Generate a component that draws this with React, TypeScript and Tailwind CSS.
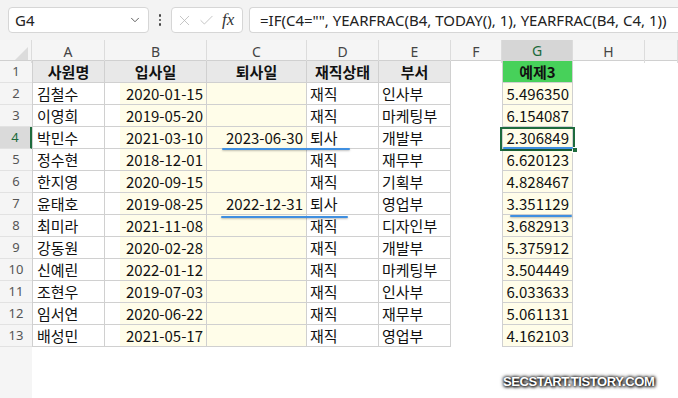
import { ChevronDown, X, Check } from "lucide-react";

const rows = [
  ["김철수", "2020-01-15", "", "재직", "인사부", "5.496350"],
  ["이영희", "2019-05-20", "", "재직", "마케팅부", "6.154087"],
  ["박민수", "2021-03-10", "2023-06-30", "퇴사", "개발부", "2.306849"],
  ["정수현", "2018-12-01", "", "재직", "재무부", "6.620123"],
  ["한지영", "2020-09-15", "", "재직", "기획부", "4.828467"],
  ["윤태호", "2019-08-25", "2022-12-31", "퇴사", "영업부", "3.351129"],
  ["최미라", "2021-11-08", "", "재직", "디자인부", "3.682913"],
  ["강동원", "2020-02-28", "", "재직", "개발부", "5.375912"],
  ["신예린", "2022-01-12", "", "재직", "마케팅부", "3.504449"],
  ["조현우", "2019-07-03", "", "재직", "인사부", "6.033633"],
  ["임서연", "2020-06-22", "", "재직", "재무부", "5.061131"],
  ["배성민", "2021-05-17", "", "재직", "영업부", "4.162103"],
];

const cols = ["A", "B", "C", "D", "E", "F", "G", "H", ""];
const grid = "grid grid-cols-[32px_73px_102px_100px_72px_72px_51px_71px_72px_1fr]";
const cell = "h-[22px] border-r border-b border-[#d0d0d0] text-[15px] leading-[21px] text-[#111] whitespace-nowrap overflow-hidden";

export default function App() {
  return (
    <div className="w-[678px] h-[398px] bg-white overflow-hidden relative font-['Noto_Sans_CJK_KR',sans-serif]">
      {/* formula bar */}
      <div className="h-[40px] bg-[#f3f3f3] flex items-center pl-[8px] gap-0">
        <div className="w-[141px] h-[26px] bg-white border border-[#d6d6d6] rounded-[4px] flex items-center justify-between pl-[6px] pr-[6px]">
          <span className="text-[15px] text-[#222] font-['Noto_Sans',sans-serif]">G4</span>
          <ChevronDown size={14} strokeWidth={1.6} className="text-[#555]" />
        </div>
        <div className="w-[22px] flex flex-col items-center gap-[2px]">
          <span className="w-[2.5px] h-[2.5px] bg-[#444] rounded-full" />
          <span className="w-[2.5px] h-[2.5px] bg-[#444] rounded-full" />
          <span className="w-[2.5px] h-[2.5px] bg-[#444] rounded-full" />
        </div>
        <div className="w-[72px] h-[26px] bg-white border border-[#d6d6d6] rounded-[4px] flex items-center pl-[4px] gap-[5px]">
          <X size={17} strokeWidth={1.1} className="text-[#b5b5b5]" />
          <Check size={17} strokeWidth={1.1} className="text-[#b5b5b5]" />
          <span className="text-[17px] italic font-['Liberation_Serif',serif] text-[#333] ml-[2px]">fx</span>
        </div>
        <div className="ml-[6px] flex-1 h-[26px] bg-white border border-[#d6d6d6] rounded-l-[4px] border-r-0 flex items-center pl-[10px]">
          <span className="text-[15px] text-[#222] font-['Noto_Sans',sans-serif] whitespace-nowrap">
            =IF(C4="", YEARFRAC(B4, TODAY(), 1), YEARFRAC(B4, C4, 1))
          </span>
        </div>
      </div>

      <div className="relative">
        {/* column headers */}
        <div className={`${grid} h-[21px] bg-[#f5f5f5] border-b border-[#d0d0d0]`}>
          <div className="relative border-r border-[#dcdcdc]">
            <div className="absolute right-[3px] bottom-[3px] w-0 h-0 border-l-[13px] border-l-transparent border-b-[13px] border-b-[#dcdcdc]" />
          </div>
          {cols.map((c, i) => (
            <div
              key={i}
              className={`flex items-center justify-center text-[14px] font-['Noto_Sans',sans-serif] border-r border-[#dcdcdc] ${
                c === "G" ? "bg-[#d6d6d6] text-[#1b6a3a] border-b-2 border-b-[#1e6b3d]" : "text-[#444]"
              }`}
            >
              {c}
            </div>
          ))}
        </div>

        {/* header row 1 */}
        <div className={grid}>
          <div className="h-[22px] bg-[#f5f5f5] border-b border-[#e2e2e2] flex items-center justify-center text-[13px] text-[#555] font-['Noto_Sans',sans-serif]">1</div>
          {["사원명", "입사일", "퇴사일", "재직상태", "부서"].map((h, i) => (
            <div key={h} className={`${cell} ${i === 0 ? "border-l" : ""} bg-[#e8e8e8] font-bold text-center text-[14px]`}>{h}</div>
          ))}
          <div />
          <div className={`${cell} border-l bg-[#47d15a] font-bold text-center text-[14px]`}>예제3</div>
          <div />
          <div />
        </div>

        {rows.map((r, idx) => {
          const n = idx + 2;
          const sel = n === 4;
          return (
            <div key={n} className={grid}>
              <div
                className={`h-[22px] border-b border-[#e2e2e2] flex items-center justify-center text-[13px] font-['Noto_Sans',sans-serif] ${
                  sel ? "bg-[#dadada] text-[#1b6a3a] border-r-2 border-r-[#1e6b3d]" : "bg-[#f5f5f5] text-[#555]"
                }`}
              >
                {n}
              </div>
              <div className={`${cell} border-l pl-[4px]`}>{r[0]}</div>
              <div className={`${cell} pl-[15px]`}>
                <div className="h-full bg-[#fffde9] text-right pr-[3px]">{r[1]}</div>
              </div>
              <div className={`${cell} bg-[#fffde9] text-right pr-[3px]`}>{r[2]}</div>
              <div className={`${cell} pl-[3px]`}>{r[3]}</div>
              <div className={`${cell} pl-[3px]`}>{r[4]}</div>
              <div />
              <div className={`${cell} border-l bg-[#fffde9] text-right pr-[3px]`}>{r[5]}</div>
              <div />
              <div />
            </div>
          );
        })}

        <div className="h-[60px] w-[32px] bg-[#f5f5f5]" />

        {/* selection G4 */}
        <div className="absolute left-[500px] top-[87px] w-[75px] h-[24px] border-2 border-[#1e6b3d]" />
        <div className="absolute left-[572px] top-[107px] w-[6px] h-[6px] bg-[#1e6b3d] border border-white" />

        {/* hand-drawn underlines */}
        <div className="absolute left-[222px] top-[108px] w-[128px] h-[2px] rounded-full bg-[#3f8fe0] shadow-[0_1px_2px_rgba(0,0,0,0.25)]" />
        <div className="absolute left-[503px] top-[107px] w-[70px] h-[2px] rounded-full bg-[#3f8fe0] shadow-[0_1px_2px_rgba(0,0,0,0.25)]" />
        <div className="absolute left-[221px] top-[176px] w-[127px] h-[2px] rounded-full bg-[#3f8fe0] shadow-[0_1px_2px_rgba(0,0,0,0.25)]" />
        <div className="absolute left-[510px] top-[175px] w-[62px] h-[2px] rounded-full bg-[#3f8fe0] shadow-[0_1px_2px_rgba(0,0,0,0.25)]" />
      </div>

      <div className="absolute left-[503px] top-[372px] text-[13px] font-bold text-white tracking-[-0.4px] font-['Liberation_Sans',sans-serif] [text-shadow:0_0_3px_#000,0_0_4px_#000,1px_1px_3px_#333]">
        SECSTART.TISTORY.COM
      </div>
    </div>
  );
}
